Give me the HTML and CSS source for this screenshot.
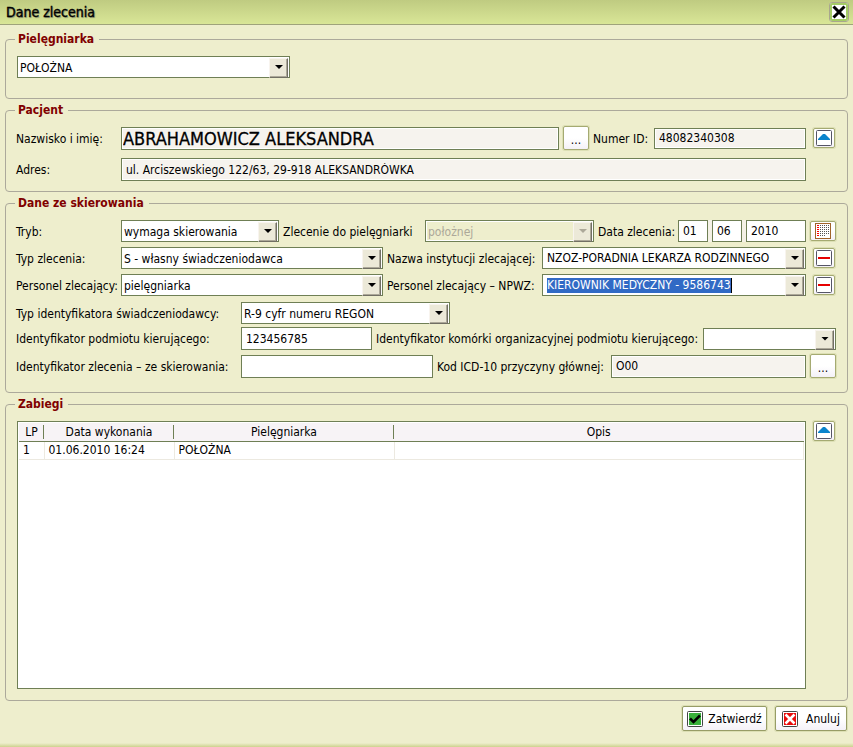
FILE: index.html
```html
<!DOCTYPE html>
<html lang="pl">
<head>
<meta charset="utf-8">
<title>Dane zlecenia</title>
<link rel="stylesheet" href="styles.css">
</head>
<body>
<header class="titlebar">
  <h1 class="title">Dane zlecenia</h1>
  <button class="close" type="button" aria-label="Zamknij">
    <svg width="14" height="14" viewBox="0 0 14 14"><path d="M1.500 1.500L12.500 12.500M12.500 1.500L1.500 12.500" stroke="#000" stroke-width="3"/></svg>
  </button>
</header>
<form class="form">
  <fieldset class="group group-nurse">
    <legend>Pielęgniarka</legend>
    <div class="row">
      <div class="combo w-nurse"><select aria-label="Pielęgniarka"><option>POŁOŻNA</option></select></div>
    </div>
  </fieldset>

  <fieldset class="group group-patient">
    <legend>Pacjent</legend>
    <div class="row">
      <label class="lbl-a" for="name">Nazwisko i imię:</label>
      <input class="field readonly patient grow" id="name" value="ABRAHAMOWICZ ALEKSANDRA" readonly>
      <button class="btn dots" type="button" aria-label="Wybierz pacjenta">...</button>
      <label class="lbl-num" for="num">Numer ID:</label>
      <input class="field readonly w-id short" id="num" value="48082340308" readonly>
      <button class="btn icon" type="button" aria-label="Zwiń dane pacjenta">
        <svg width="16" height="16" viewBox="0 0 16 16"><rect x=".5" y=".5" width="15" height="15" rx="1" fill="#fff" stroke="#555566"/><path d="M2 10V9L7 4H9L14 9V10Z" fill="#0a84cc"/></svg>
      </button>
    </div>
    <div class="row">
      <label class="lbl-a" for="addr">Adres:</label>
      <input class="field readonly grow" id="addr" value="ul. Arciszewskiego 122/63, 29-918 ALEKSANDRÓWKA" readonly>
      <span class="side"></span>
    </div>
  </fieldset>

  <fieldset class="group group-referral">
    <legend>Dane ze skierowania</legend>
    <div class="row">
      <label class="lbl-a" for="mode">Tryb:</label>
      <div class="combo w-mode"><select id="mode"><option>wymaga skierowania</option></select></div>
      <label class="lbl-order" for="orderto">Zlecenie do pielęgniarki</label>
      <div class="combo disabled grow"><select id="orderto" disabled><option>położnej</option></select></div>
      <label class="lbl-date" for="day">Data zlecenia:</label>
      <div class="date">
        <input class="field w-day" id="day" value="01">
        <input class="field w-day" aria-label="Miesiąc" value="06">
        <input class="field w-year" aria-label="Rok" value="2010">
      </div>
      <button class="btn calendar" type="button" aria-label="Kalendarz">
        <svg width="16" height="16" viewBox="0 0 16 16"><rect x=".5" y=".5" width="15" height="15" fill="#fff" stroke="#a0642a"/><path d="M2 2h2v1h-2zM2 4h2v1h-2zM2 6h2v1h-2zM2 8h2v1h-2zM2 10h2v1h-2zM2 12h2v1h-2z" fill="#f00"/><path d="M5 2.500H14M5 4.500H14M5 6.500H14M5 8.500H14M5 10.500H14M5 12.500H10" stroke="#555" stroke-dasharray="1 1"/></svg>
      </button>
    </div>
    <div class="row">
      <label class="lbl-a" for="type">Typ zlecenia:</label>
      <div class="combo w-type"><select id="type"><option>S - własny świadczeniodawca</option></select></div>
      <label class="lbl-inst" for="inst">Nazwa instytucji zlecającej:</label>
      <div class="combo grow"><input id="inst" value="NZOZ-PORADNIA LEKARZA RODZINNEGO"></div>
      <button class="btn icon" type="button" aria-label="Usuń instytucję">
        <svg width="16" height="16" viewBox="0 0 16 16"><rect x=".5" y=".5" width="15" height="15" rx="1" fill="#fff" stroke="#555566"/><path d="M2 8H14" stroke="#e60000" stroke-width="2"/></svg>
      </button>
    </div>
    <div class="row">
      <label class="lbl-a" for="staff">Personel zlecający:</label>
      <div class="combo w-type"><select id="staff"><option>pielęgniarka</option></select></div>
      <label class="lbl-inst" for="npwz">Personel zlecający – NPWZ:</label>
      <div class="combo grow"><input class="selected" id="npwz" value="KIEROWNIK MEDYCZNY - 9586743"></div>
      <button class="btn icon" type="button" aria-label="Usuń personel">
        <svg width="16" height="16" viewBox="0 0 16 16"><rect x=".5" y=".5" width="15" height="15" rx="1" fill="#fff" stroke="#555566"/><path d="M2 8H14" stroke="#e60000" stroke-width="2"/></svg>
      </button>
    </div>
    <div class="row row-regon">
      <label class="lbl-b" for="idtype">Typ identyfikatora świadczeniodawcy:</label>
      <div class="combo w-regon"><select id="idtype"><option>R-9 cyfr numeru REGON</option></select></div>
    </div>
    <div class="row row-unit">
      <label class="lbl-b" for="subject">Identyfikator podmiotu kierującego:</label>
      <input class="field w-subject" id="subject" value="123456785">
      <label class="lbl-unit" for="unit">Identyfikator komórki organizacyjnej podmiotu kierującego:</label>
      <div class="combo grow"><select id="unit"><option></option></select></div>
    </div>
    <div class="row">
      <label class="lbl-b" for="orderid">Identyfikator zlecenia – ze skierowania:</label>
      <input class="field w-orderid" id="orderid" value="">
      <label class="lbl-icd" for="icd">Kod ICD-10 przyczyny głównej:</label>
      <input class="field readonly grow" id="icd" value="O00" readonly>
      <button class="btn dots" type="button" aria-label="Wybierz kod ICD-10">...</button>
    </div>
  </fieldset>

  <fieldset class="group group-list">
    <legend>Zabiegi</legend>
    <div class="row row-list">
      <div class="list">
        <table>
          <colgroup><col class="c-lp"><col class="c-date"><col class="c-nurse"><col></colgroup>
          <thead><tr><th>LP</th><th>Data wykonania</th><th>Pielęgniarka</th><th>Opis</th></tr></thead>
          <tbody><tr><td>1</td><td>01.06.2010 16:24</td><td>POŁOŻNA</td><td></td></tr></tbody>
        </table>
      </div>
      <button class="btn icon" type="button" aria-label="Zwiń zabiegi">
        <svg width="16" height="16" viewBox="0 0 16 16"><rect x=".5" y=".5" width="15" height="15" rx="1" fill="#fff" stroke="#555566"/><path d="M2 10V9L7 4H9L14 9V10Z" fill="#0a84cc"/></svg>
      </button>
    </div>
  </fieldset>

  <div class="actions">
    <button class="btn action" type="submit">
      <svg width="16" height="16" viewBox="0 0 16 16"><rect x=".5" y=".5" width="15" height="15" rx="1" fill="#fff" stroke="#444"/><rect x="2" y="2" width="12" height="12" fill="#39b03a"/><path d="M3 7.500L6.500 11L13 4.500" fill="none" stroke="#000" stroke-width="2.500"/></svg>
      Zatwierdź
    </button>
    <button class="btn action cancel" type="button">
      <svg width="16" height="16" viewBox="0 0 16 16"><rect x=".5" y=".5" width="15" height="15" rx="1" fill="#fff" stroke="#444"/><rect x="2" y="2" width="12" height="12" fill="#e80c0c"/><path d="M3.500 3.500L12.500 12.500M12.500 3.500L3.500 12.500" stroke="#fff" stroke-width="2.500"/></svg>
      Anuluj
    </button>
  </div>
</form>
</body>
</html>
```
FILE: styles.css
```css
* { box-sizing: border-box; }

body {
  margin: 0;
  min-height: 100vh;
  display: flex;
  flex-direction: column;
  background: linear-gradient(#eeeecd, #cdd28f) left bottom / 100% 4px no-repeat #eeeecd;
  color: #000;
  font: 12px/16px "DejaVu Sans Condensed", "DejaVu Sans", sans-serif;
}

input, select, button { font: inherit; color: inherit; margin: 0; border-radius: 0; }

.titlebar {
  display: flex;
  align-items: center;
  justify-content: space-between;
  height: 25px;
  padding: 0 4px 0 6px;
  border-bottom: 1px solid #9fa37b;
  background: linear-gradient(#bfcb81, #d9e697);
}
.title {
  margin: 0;
  font-size: 14px;
  font-weight: 400;
  -webkit-text-stroke: 0.4px #000;
  text-shadow: 1px 1px 1px #8a8f70;
}
.close {
  display: flex;
  align-items: center;
  justify-content: center;
  width: 20px;
  height: 20px;
  padding: 0;
  border: 1px solid #a9a68e;
  border-radius: 3px;
  background: #fff;
  box-shadow: inset 0 0 0 2px #a5cc66;
}

.form {
  flex: 1;
  display: flex;
  flex-direction: column;
  gap: 3px;
  padding: 6px 5px 11px;
}

.group {
  margin: 0;
  min-width: 0;
  padding: 9px 11px 10px 10px;
  border: 1px solid #aca99b;
  border-radius: 4px;
}
.group legend {
  margin-left: -1px;
  padding: 0 5px 0 3px;
  color: #800000;
  font-weight: 700;
}
.group-nurse { padding-bottom: 20px; }
.group-patient { padding-top: 8px; }
.group-referral { padding-bottom: 14px; }
.group-list { padding-bottom: 11px; }

.row { display: flex; align-items: center; gap: 4px; margin-bottom: 5px; }
.row:last-child { margin-bottom: 0; }
.group-nurse .row { padding-left: 1px; }
.group-patient .row:last-child { margin-top: 8px; }
.row-regon { margin-top: 6px; margin-bottom: 3px; }
.row-unit { margin-bottom: 4px; }
.grow { flex: 1 1 0; min-width: 0; }
.side { width: 26px; }

.row label { flex: none; white-space: nowrap; padding-top: 1px; }
.row .lbl-a { width: 101px; }
.row .lbl-b { width: 221px; }
.row .lbl-num { width: 57px; }
.row .lbl-order { width: 138px; }
.row .lbl-date { width: 76px; }
.row .lbl-inst { width: 151px; }
.row .lbl-unit { width: 323px; }
.row .lbl-icd { width: 170px; }

.field {
  height: 23px;
  padding: 0 4px;
  border: 1px solid #6f7f55;
  background: #fff;
}
.field.readonly { background: #f6f3ee; box-shadow: inset 0 0 0 1px #fff; }
.field.short { height: 21px; }
.patient { padding-left: 1px; font-size: 18px; -webkit-text-stroke: 0.3px #000; }

.combo {
  position: relative;
  display: flex;
  align-items: center;
  height: 22px;
  border: 1px solid #6f7f55;
  background: #fff;
}
.combo select {
  appearance: none;
  width: 100%;
  height: 20px;
  padding: 1px 20px 0 2px;
  border: 0;
  background: transparent;
}
.combo input {
  width: 100%;
  margin-left: 4px;
  padding: 0;
  border: 0;
  background: transparent;
}
.combo .selected {
  width: auto;
  field-sizing: content;
  height: 15px;
  border-right: 1px solid #000;
  background: #316ac5;
  color: #fff;
}
.combo::before, .combo::after { content: ""; position: absolute; pointer-events: none; }
.combo::before {
  top: 1px;
  right: 1px;
  width: 17px;
  height: 18px;
  border: 1px solid;
  border-color: #f8f4ee #716f64 #716f64 #f8f4ee;
  box-shadow: inset -1px -1px 0 #aca899;
  background: #ece9d8;
}
.combo::after {
  top: 8px;
  right: 6px;
  width: 8px;
  height: 4px;
  background: #000;
  clip-path: polygon(0 0, 100% 0, 50% 100%);
}
.combo.disabled { background: #eeeecd; box-shadow: inset 0 0 0 1px #fff; }
.combo.disabled select { color: #aca899; opacity: 1; }
.combo.disabled::after { background: #aca899; }

.w-nurse { width: 273px; }
.w-mode { width: 158px; }
.w-type { width: 262px; }
.w-regon { width: 209px; }
.w-subject { width: 131px; }
.w-orderid { width: 192px; }
.w-id { width: 152px; }
.date { display: flex; gap: 4px; background: #f4f1e6; }
.date .field { height: 22px; }
.w-day { width: 30px; }
.w-year { width: 60px; }

.btn {
  flex: none;
  display: inline-flex;
  align-items: center;
  justify-content: center;
  padding: 0;
  border: 1px solid #a5aa72;
  border-radius: 2px;
  background: linear-gradient(#fff 50%, #f4f1f7);
  box-shadow: 0 0 0 1px #dcdfb4;
}
.btn.icon { width: 22px; height: 20px; margin: 0 1px 0 3px; }
.btn.dots { width: 26px; height: 24px; padding-top: 3px; }
.btn.calendar { width: 26px; height: 20px; }

.row-list { align-items: flex-start; padding-left: 1px; }
.list {
  flex: 1;
  min-height: 268px;
  padding: 1px;
  border: 1px solid #6f7f55;
  background: #fff;
}
.list table { width: 100%; table-layout: fixed; border-collapse: collapse; }
.list .c-lp { width: 25px; }
.list .c-date { width: 130px; }
.list .c-nurse { width: 220px; }
.list th {
  height: 18px;
  padding: 0;
  border-bottom: 1px solid #6f7f55;
  background: linear-gradient(90deg, #6f7f55, #6f7f55) right center / 1px 14px no-repeat, #f7f3f6;
  font-weight: 400;
}
.list th:last-child { background: #f7f3f6; }
.list td {
  height: 18px;
  padding: 0 4px;
  border-right: 1px solid #ece9e0;
  border-bottom: 1px solid #ece9e0;
}

.actions { display: flex; justify-content: flex-end; gap: 8px; padding: 2px 1px 0 0; }
.action { gap: 5px; width: 85px; height: 25px; border-color: #979c66; }
.action.cancel { gap: 8px; width: 72px; }
```
